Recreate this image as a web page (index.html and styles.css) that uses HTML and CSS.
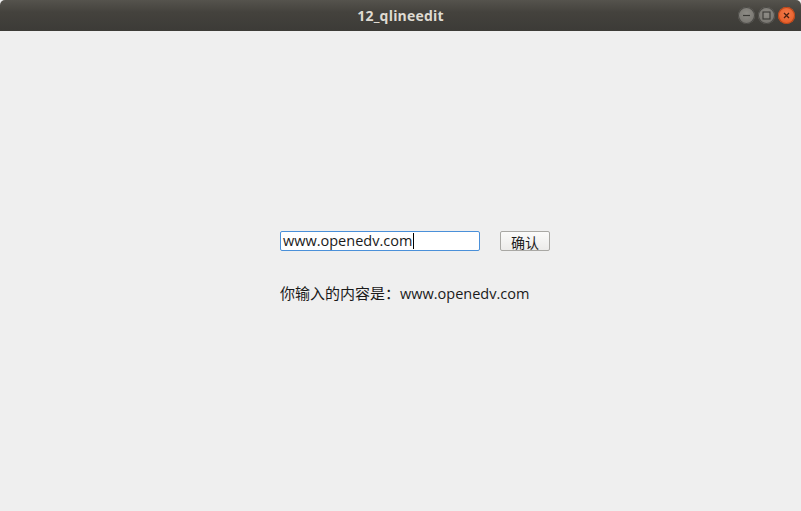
FILE: index.html
```html
<!DOCTYPE html>
<html>
<head>
<meta charset="utf-8">
<link rel="stylesheet" href="styles.css">
</head>
<body>
<div class="window">
  <div class="titlebar">
    <span class="title">12_qlineedit</span>
    <div class="controls">
      <span class="ctl min"><svg width="17" height="17" viewBox="0 0 17 17"><line x1="5" y1="8.5" x2="12" y2="8.5" stroke="#3a3935" stroke-width="1.2"/></svg></span>
      <span class="ctl max"><svg width="17" height="17" viewBox="0 0 17 17"><rect x="5" y="5" width="7" height="7" fill="none" stroke="#3a3935" stroke-width="1.1"/></svg></span>
      <span class="ctl close"><svg width="17" height="17" viewBox="0 0 17 17"><path d="M6 6 L11 11 M11 6 L6 11" stroke="#4a2010" stroke-width="1.3"/></svg></span>
    </div>
  </div>
  <div class="content">
    <div class="row">
      <div class="lineedit"><span class="val">www.openedv.com</span><span class="caret"></span></div>
      <button class="btn">确认</button>
    </div>
    <div class="label"><span class="cjk">你输入的内容是：</span>www.openedv.com</div>
  </div>
</div>
</body>
</html>
```
FILE: styles.css
```css
html, body {
  margin: 0;
  padding: 0;
  width: 801px;
  height: 511px;
  overflow: hidden;
  background: #efefef;
}
.window {
  width: 801px;
  height: 511px;
  display: flex;
  flex-direction: column;
  background: #efefef;
}
.titlebar {
  height: 31px;
  flex: none;
  position: relative;
  display: flex;
  align-items: center;
  justify-content: center;
  background: linear-gradient(#55534d, #44423d 40%, #3c3b37);
  border-radius: 5px 5px 0 0;
}
.title {
  font-family: "Open Sans", "DejaVu Sans", sans-serif;
  font-weight: bold;
  font-size: 14px;
  color: #dfdbd2;
  letter-spacing: 0.2px;
  margin-top: -1px;
}
.controls {
  position: absolute;
  right: 6px;
  top: 7px;
  display: flex;
  gap: 3px;
}
.ctl {
  width: 17px;
  height: 17px;
  border-radius: 50%;
  display: flex;
  background: radial-gradient(circle at 50% 40%, #8e8c86, #6e6c67);
  box-shadow: inset 0 0 0 1px #4b4a46;
}
.ctl.close {
  background: radial-gradient(circle at 50% 40%, #f47a4a, #e2541d);
  box-shadow: inset 0 0 0 1px #b8461a;
}
.content {
  flex: 1;
  padding: 200px 0 0 280px;
  font-family: "Open Sans", "DejaVu Sans", "Noto Sans CJK SC", sans-serif;
  color: #1a1a1a;
}
.row {
  display: flex;
  gap: 20px;
  height: 20px;
}
.lineedit {
  box-sizing: border-box;
  width: 200px;
  height: 20px;
  border: 1px solid #4a90d9;
  border-radius: 2px;
  background: #ffffff;
  display: flex;
  align-items: center;
  padding-left: 2px;
  font-size: 14.5px;
  line-height: 18px;
}
.caret {
  width: 1px;
  height: 16px;
  background: #000;
  margin-left: 1px;
}
.btn {
  box-sizing: border-box;
  width: 50px;
  height: 20px;
  border: 1px solid #a9a8a4;
  border-radius: 2px;
  background: linear-gradient(#fbfbfa, #ecebe9);
  font-family: "Noto Sans CJK SC", sans-serif;
  font-size: 14px;
  line-height: 18px;
  padding: 1px 0 0;
  color: #1a1a1a;
}
.label {
  margin-top: 32px;
  font-family: "Open Sans", "DejaVu Sans", "Noto Sans CJK SC", sans-serif;
  font-size: 14.5px;
  line-height: 20px;
  white-space: nowrap;
}
.cjk {
  font-family: "Noto Sans CJK SC", sans-serif;
  font-size: 15px;
}
```
